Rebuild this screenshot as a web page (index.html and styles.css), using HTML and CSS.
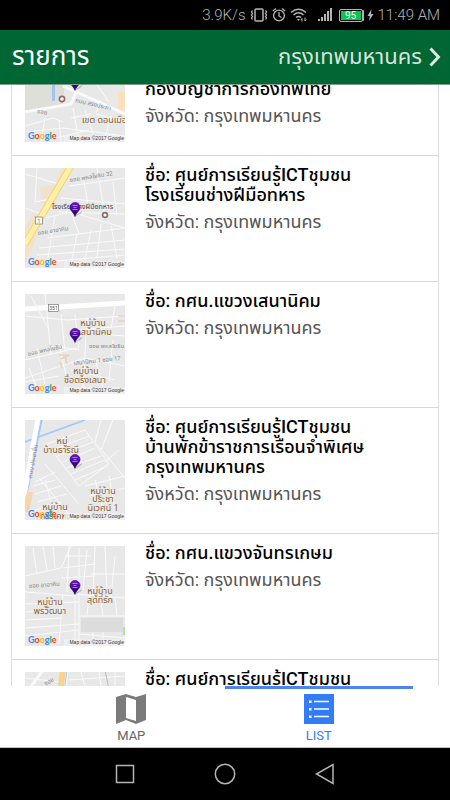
FILE: index.html
```html
<!DOCTYPE html>
<html lang="th">

<head>
  <meta charset="UTF-8">
  <meta name="viewport" content="width=device-width, initial-scale=1">
  <title>รายการ</title>
  <link rel="stylesheet" href="styles.css">
</head>

<body>

  <!-- shared drawings -->
  <svg class="defs" aria-hidden="true">
    <defs>
      <linearGradient id="pin-fill" x1="0" y1="0" x2="0" y2="1">
        <stop offset="0" stop-color="#7a12d8" />
        <stop offset="0.5" stop-color="#4a0a9c" />
        <stop offset="1" stop-color="#180050" />
      </linearGradient>
      <g id="pin">
        <path d="M50 48 L57 43 Q57 46 50 48z" fill="#000" opacity="0.25" />
        <path d="M50 48.500C49 44.500 45 43 45 39.500a5 5 0 0 1 10 0C55 43 51 44.500 50 48.500z" fill="url(#pin-fill)" stroke="#26005e" stroke-width="0.600" />
        <path d="M47.500 37.500h5M48.500 39.500h3M47.500 41.500h5" stroke="#b9a0e0" stroke-width="0.800" fill="none" />
      </g>
      <g id="map-credit">
        <rect x="39" y="93" width="61" height="7" fill="#f2f2f2" opacity="0.700" />
        <text x="3" y="97" class="logo-text"><tspan fill="#4285f4">G</tspan><tspan fill="#ea4335">o</tspan><tspan fill="#fbbc05">o</tspan><tspan fill="#4285f4">g</tspan><tspan fill="#34a853">l</tspan><tspan fill="#ea4335">e</tspan></text>
        <text x="99" y="98" text-anchor="end" class="credit-text">Map data ©2017 Google</text>
      </g>
    </defs>
  </svg>

  <div class="status-bar">
    <span>3.9K/s</span>
    <svg width="18" height="16" viewBox="0 0 18 16" fill="none" stroke="#b4b4b4">
      <rect x="5" y="2" width="8" height="12" rx="1" stroke-width="1.500" />
      <path d="M2.500 3.500l-1 1.500 1 1.500-1 1.500 1 1.500-1 1.500 1 1.500M15.500 3.500l1 1.500-1 1.500 1 1.500-1 1.500 1 1.500-1 1.500" stroke-width="1.300" />
    </svg>
    <svg width="14" height="16" viewBox="0 0 14 16" fill="none" stroke="#b4b4b4">
      <circle cx="7" cy="8.500" r="5.400" stroke-width="1.300" />
      <path d="M7 5v4l2.500 1.500M0.800 4L4 1.500M13.200 4L10 1.500" stroke-width="1.300" />
    </svg>
    <svg class="wifi" width="18" height="16" viewBox="0 0 18 16" fill="none" stroke="#b4b4b4" stroke-width="1.500">
      <path d="M1 5.500Q8.500-1 16 5.500M3.500 8Q8.500 3.500 13.500 8M6 10.500Q8.500 8.500 11 10.500" />
      <path d="M8.500 14l-1.500-2h3z" fill="#b4b4b4" stroke="none" />
      <path d="M12 14.500v-3l-1.200 1.500M15 10.500v3.500l1.200-1.500" stroke-width="1" />
    </svg>
    <svg class="signal" width="15" height="16" viewBox="0 0 15 16" fill="#b4b4b4">
      <path d="M0 12h2v2H0zM3 10h2v4H3zM6 7h2v7H6zM9 4h2v10H9zM12 1h2v13h-2z" />
    </svg>
    <span class="battery">95</span>
    <svg width="7" height="16" viewBox="0 0 7 16" fill="#b4b4b4">
      <path d="M4.500 2L0.500 9h2.300L2 14l4.500-7H4z" />
    </svg>
    <span class="clock">11:49 AM</span>
  </div>

  <header class="header">
    <h1 class="header-title">รายการ</h1>
    <button class="province-button" type="button">
      กรุงเทพมหานคร
      <svg width="12" height="20" viewBox="0 0 12 20" fill="none" stroke="#dfe8e2" stroke-width="3">
        <path d="M1.500 1.500L9.500 10l-8 8.500" />
      </svg>
    </button>
  </header>

  <main class="content">
    <ul class="place-list">

      <li class="place">
        <svg class="map" viewBox="0 0 100 100">
          <path d="M0 0h43L38 62 0 72z" fill="#dfdfd9" />
          <path d="M27 28h3v31h-3z" fill="#9fc5f5" />
          <path d="M93 50h7v18h-7z" fill="#fbe0bd" />
          <g class="roads">
            <path class="wide" d="M38 44L100 72M52 48L46 62 0 70" />
            <path d="M0 84l28-8 10 4M2 90l36-4 62 8M20 76l-4 24M48 66l6 34M60 68l10 30M75 58l-4 14 29 8M86 74l-6 22M34 78l2 22M46 76l20-4M70 40l14 20M30 96l34-8" />
          </g>
          <circle cx="37" cy="57" r="2.600" fill="#fff" stroke="#8d6e63" stroke-width="1.600" />
          <text class="street" transform="rotate(13 50 60)" x="50" y="60">ถนน สรงประภา</text>
          <text class="street" transform="rotate(10 12 70)" x="12" y="71">ซอย</text>
          <text class="area" x="57" y="81">เขต ดอนเมือง</text>
          <use href="#pin" />
          <use href="#map-credit" />
        </svg>
        <div class="place-text">
          <h2>ชื่อ: ศูนย์การเรียนรู้ICTชุมชน<br>กรมยุทธศึกษาทหาร<br>กองบัญชาการกองทัพไทย</h2>
          <p>จังหวัด: กรุงเทพมหานคร</p>
        </div>
      </li>

      <li class="place">
        <svg class="map" viewBox="0 0 100 100">
          <path d="M15 20l14-3 8-17h9L34 24 28 40H18zM8 46h10L8 78 0 96V60z" fill="#f6dfc0" opacity="0.800" />
          <g class="roads">
            <path d="M44 18l56-8M36 30l64 6M34 44l66 2M20 50l26-6 54 16M46 44l8 22M58 8l6 34M72 0l8 48M88 14l4 34M0 6l34 10M12 0l-2 34 20-4M0 40l22 8M22 70l78-10M14 80l86-8M12 87l88-6M8 95l92-8M30 48l-8 48M52 66l-6 30M66 62l-6 30M76 56l-4 34M86 58l6 32" />
          </g>
          <path d="M46-2L0 76" stroke="#f3d27e" stroke-width="7" />
          <path d="M46-2L0 76" stroke="#fff0a8" stroke-width="5" />
          <text class="street" transform="rotate(-9 45 14)" x="45" y="14">ซอย พหลโยธิน 32</text>
          <text class="street" transform="rotate(-9 13 67)" x="13" y="67">ซอย อาอาคิน</text>
          <text class="poi" x="27" y="41">โรงเรียนช่างฝีมือทหาร</text>
          <circle cx="80" cy="47" r="2.400" fill="#fff" stroke="#8d6e63" stroke-width="1.700" />
          <rect x="10.500" y="49" width="7" height="7" fill="#fff" stroke="#777" stroke-width="0.700" />
          <text class="road-number" x="14" y="55">1</text>
          <use href="#pin" />
          <use href="#map-credit" />
        </svg>
        <div class="place-text">
          <h2>ชื่อ: ศูนย์การเรียนรู้ICTชุมชน<br>โรงเรียนช่างฝีมือทหาร</h2>
          <p>จังหวัด: กรุงเทพมหานคร</p>
        </div>
      </li>

      <li class="place">
        <svg class="map" viewBox="0 0 100 100">
          <path class="main-road" d="M0 15L100 9" />
          <g class="roads">
            <path d="M0 22l42 4 58-4M20 0l6 60M6 2l18 34M36 20l4 38M4 60l26-8 24 4M0 66l52-12M0 84l60-20 40 8M12 54l8 36M34 50l8 36M50 20l4 36M62 24l-4 70M74 40l26 2M70 64l8 30M88 46l-4 40M4 74l8 20M46 76l44 10M54 36l46-4M90 12l-4 22M0 88l34-6" />
          </g>
          <path d="M34 61h10l-8 4M35 68l2 6M40 62l2 8M93 22h7M93 27h7" fill="none" stroke="#e3d5bc" stroke-width="1.500" />
          <text class="street" transform="rotate(-13 3 61)" x="3" y="62">ซอย พหลโยธิน</text>
          <text class="street" x="64" y="54">ซอย พหลโยธิน</text>
          <text class="street" transform="rotate(-6 49 71)" x="49" y="71">เสนานิคม 1 ซอย 17</text>
          <rect x="23.500" y="10.500" width="10" height="7" fill="#fff" stroke="#777" stroke-width="0.700" />
          <text class="road-number" x="28.500" y="16">351</text>
          <text class="area" x="68" y="32" text-anchor="middle">หมู่บ้าน</text>
          <text class="area" x="70" y="41" text-anchor="middle">เสนานิคม</text>
          <text class="area" x="61" y="80" text-anchor="middle">หมู่บ้าน</text>
          <text class="area" x="60" y="89" text-anchor="middle">ซื่อตรงเสนา</text>
          <use href="#pin" />
          <use href="#map-credit" />
        </svg>
        <div class="place-text">
          <h2>ชื่อ: กศน.แขวงเสนานิคม</h2>
          <p>จังหวัด: กรุงเทพมหานคร</p>
        </div>
      </li>

      <li class="place">
        <svg class="map" viewBox="0 0 100 100">
          <path d="M0 22L60 0" fill="none" stroke="#a3c9fb" stroke-width="1.800" />
          <path d="M17-2L2 72" stroke="#a3c9fb" stroke-width="2" />
          <path class="main-road" d="M13-2L-1 76" />
          <path d="M2 72h6L4 92H0V80z" fill="#f3d5ae" />
          <g class="roads">
            <path d="M22 24l38-14 24 34-30 22-32-42M28 30l36-14M32 36l36-14M38 42l32-14M42 48l34-12M46 54l34-14M50 60l32-14M20 44l34 40M14 58l30 36M8 66l22-6M10 74l26-8M12 82l30-8M10 90l26-8M20 60l8 28M30 52l-20 10M76 0l-6 22 30 36M88 0l-12 30M60 66l40-10M64 76l36-8M70 60l8 30M84 56l6 32M94 30l-14 12" />
          </g>
          <text class="street" transform="rotate(-80 6 58)" x="6" y="59">ถนน ประชาชื่น</text>
          <text class="area" x="37" y="24" text-anchor="middle">หมู่</text>
          <text class="area" x="36" y="33" text-anchor="middle">บ้านธาริณี</text>
          <text class="area" x="78" y="74" text-anchor="middle">หมู่บ้าน</text>
          <text class="area" x="78" y="82" text-anchor="middle">ประชา</text>
          <text class="area" x="78" y="91" text-anchor="middle">นิเวศน์ 1</text>
          <text class="area" x="30" y="90" text-anchor="middle">หมู่บ้าน</text>
          <text class="area" x="30" y="99" text-anchor="middle">การเคหะ</text>
          <use href="#pin" />
          <use href="#map-credit" />
        </svg>
        <div class="place-text">
          <h2>ชื่อ: ศูนย์การเรียนรู้ICTชุมชน<br>บ้านพักข้าราชการเรือนจำพิเศษ<br>กรุงเทพมหานคร</h2>
          <p>จังหวัด: กรุงเทพมหานคร</p>
        </div>
      </li>

      <li class="place">
        <svg class="map" viewBox="0 0 100 100">
          <path d="M56 72h42v14H56z" fill="#dcdcdc" />
          <path d="M98 81h2v8h-2z" fill="#b9dfa0" />
          <g class="roads">
            <path d="M0 30l36-8 10-22M8 2l4 26M18 0l4 24M28 0l2 22M40 10h26M38 22l32-4M36 32l34-2M44 0l-2 46M54 2v94M62 4l-4 40M70 0l-2 50M80 0l2 48M90 10l-4 40M66 28h34M50 48l50 4M0 46l50 4M0 58l54-2M0 66l38-2M0 74l36-2M0 82l54-4M0 90l54-6M38 48l-4 50M54 70h46M64 50l-2 20M76 52l2 18M90 52l2 18M54 88l46 4M68 86v10M78 86v10M50 40v60" />
          </g>
          <text class="street" transform="rotate(-4 4 41)" x="4" y="42">ซอย อาอาคิน</text>
          <text class="area" x="75" y="48" text-anchor="middle">หมู่บ้าน</text>
          <text class="area" x="75" y="57" text-anchor="middle">สุดที่รัก</text>
          <text class="area" x="25" y="59" text-anchor="middle">หมู่บ้าน</text>
          <text class="area" x="25" y="68" text-anchor="middle">พรวัฒนา</text>
          <use href="#pin" />
          <use href="#map-credit" />
        </svg>
        <div class="place-text">
          <h2>ชื่อ: กศน.แขวงจันทรเกษม</h2>
          <p>จังหวัด: กรุงเทพมหานคร</p>
        </div>
      </li>

      <li class="place">
        <svg class="map" viewBox="0 0 100 100">
          <g class="roads">
            <path class="wide" d="M18-2L2 20M42-2l-4 30" />
            <path d="M0 6l36 4M44 8l56-4M56 0l8 30M74 0l4 30M90 0v30" />
          </g>
          <path d="M38-2l-5 40" stroke="#fbd18c" stroke-width="6" />
          <path d="M42-2l-4 30" stroke="#a3c9fb" stroke-width="1" />
          <path d="M80-2l6 30" stroke="#bbb" stroke-width="1" />
          <text class="street" transform="rotate(-30 20 13)" x="20" y="14">ซอย</text>
          <use href="#pin" />
          <use href="#map-credit" />
        </svg>
        <div class="place-text">
          <h2>ชื่อ: ศูนย์การเรียนรู้ICTชุมชน</h2>
          <p>จังหวัด: กรุงเทพมหานคร</p>
        </div>
      </li>

    </ul>
  </main>

  <nav class="tabs">
    <button class="tab" type="button">
      <svg width="32" height="32" viewBox="0 0 32 32" fill="#7b7b7b">
        <path fill-rule="evenodd" d="M1 4L11 1l10 3 10-3v26l-10 4-10-4-10 4zM11 4v21l10 3V7z" />
      </svg>
      MAP
    </button>
    <button class="tab active" type="button">
      <svg width="32" height="32" viewBox="0 0 32 32">
        <path d="M1 1h30v30H1z" fill="#327df6" />
        <path d="M11 8.500h15M11 16h15M11 23.500h15" stroke="#fff" stroke-width="1.300" />
        <path d="M6 7.500h2.500v2.500H6zM6 15h2.500v2.500H6zM6 22.500h2.500V25H6z" fill="#fff" />
      </svg>
      LIST
    </button>
  </nav>

  <div class="system-nav">
    <button type="button" aria-label="Recent apps">
      <svg width="24" height="24" viewBox="0 0 24 24"><rect x="3.500" y="3.500" width="17" height="17" /></svg>
    </button>
    <button type="button" aria-label="Home">
      <svg width="24" height="24" viewBox="0 0 24 24"><circle cx="12" cy="12" r="9.700" /></svg>
    </button>
    <button type="button" aria-label="Back">
      <svg width="24" height="24" viewBox="0 0 24 24"><path d="M20 2.500v19L3.500 12z" /></svg>
    </button>
  </div>

</body>

</html>
```
FILE: styles.css
```css
* {
  box-sizing: border-box;
}

body {
  margin: 0;
  height: 100vh;
  display: flex;
  flex-direction: column;
  background: #fff;
  color: #000;
  font-family: Roboto, "Noto Sans Thai", "Noto Sans", sans-serif;
}

button {
  padding: 0;
  border: none;
  background: none;
  font-family: inherit;
  cursor: pointer;
}

h1,
h2,
p,
ul {
  margin: 0;
  padding: 0;
}

svg {
  display: block;
  flex: none;
}

.defs {
  position: absolute;
  width: 0;
  height: 0;
}

/* status bar */
.status-bar {
  display: flex;
  flex: none;
  align-items: center;
  justify-content: flex-end;
  gap: 4px;
  height: 30px;
  padding-right: 10px;
  background: #000;
  color: #b4b4b4;
  font-size: 15px;
  font-weight: 300;
}

.signal {
  margin: 0 2px 0 6px;
}

.battery {
  width: 24px;
  height: 13px;
  border: 1px solid #b4b4b4;
  border-radius: 2px;
  background: #00c853;
  box-shadow: inset 0 0 0 1px #000, 2px 0 0 -1px #b4b4b4;
  color: #fff;
  font-size: 10px;
  font-weight: 400;
  line-height: 11px;
  text-align: center;
}

/* header */
.header {
  display: flex;
  flex: none;
  align-items: center;
  justify-content: space-between;
  height: 55px;
  padding: 0 9px 0 12px;
  border-bottom: 1px solid #7f9f8b;
  background: #006633;
}

.header-title {
  color: #fff;
  font-size: 26px;
  font-weight: 400;
}

.province-button {
  display: flex;
  align-items: center;
  gap: 7px;
  color: #d9e4dd;
  font-size: 22px;
}

/* list, scrolled part of the way down the first row */
.content {
  flex: 1;
  min-height: 0;
  overflow: hidden;
}

.place-list {
  margin: -56px 11px 0;
  border: 1px solid #ddd;
  border-top: none;
  list-style: none;
}

.place {
  display: flex;
  gap: 20px;
  height: 126px;
  padding: 0 13px;
  border-top: 1px solid #d8d8d8;
}

.place h2 {
  font-size: 18px;
  font-weight: 500;
  line-height: 20px;
}

.place p {
  margin-top: 7px;
  color: #555;
  font-size: 18px;
  line-height: 20px;
}

.place-text {
  flex: 1;
  padding-top: 9px;
  white-space: nowrap;
}

/* map thumbnails */
.map {
  width: 100px;
  height: 100px;
  margin-top: 12px;
  overflow: hidden;
  background: #e8e8e8;
}

.roads {
  fill: none;
  stroke: #fafafa;
  stroke-width: 1;
}

.roads .wide {
  stroke-width: 3;
}

.main-road {
  fill: none;
  stroke: #fff;
  stroke-width: 5;
}

.street {
  fill: #888;
  font-size: 6px;
}

.poi {
  fill: #444;
  font-size: 7px;
}

.area {
  fill: #8a6338;
  font-size: 9px;
}

.road-number {
  fill: #555;
  font-size: 5px;
  text-anchor: middle;
}

.logo-text {
  font-family: Lato, sans-serif;
  font-size: 9px;
  font-weight: 700;
}

.credit-text {
  fill: #333;
  font-family: "Liberation Sans", sans-serif;
  font-size: 5px;
}

/* bottom tabs */
.tabs {
  display: grid;
  flex: none;
  grid-template-columns: 1fr 5fr 5fr 1fr;
  height: 62px;
  border-bottom: 1px solid #c4c4c4;
  background: #fff;
}

.tab {
  display: flex;
  flex-direction: column;
  align-items: center;
  gap: 3px;
  padding-top: 4px;
  border-top: 3px solid transparent;
  color: #666;
  font-size: 13px;
  line-height: 16px;
}

.tab:first-child {
  grid-column: 2;
}

.tab.active {
  border-top-color: #4c84f0;
  color: #327df6;
}

/* android buttons */
.system-nav {
  display: flex;
  flex: none;
  align-items: center;
  justify-content: center;
  gap: 76px;
  height: 52px;
  background: #000;
}

.system-nav svg {
  fill: none;
  stroke: #b4b4b4;
  stroke-width: 1.500;
}
```
